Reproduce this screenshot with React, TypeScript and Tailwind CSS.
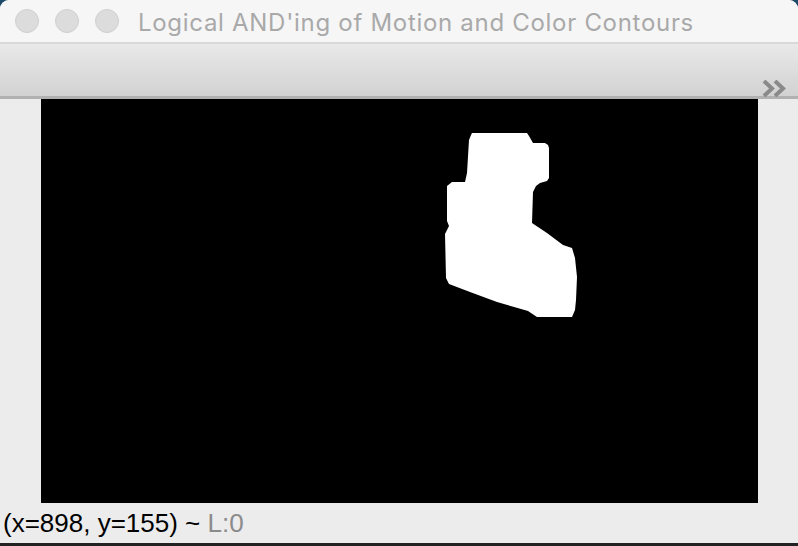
const blob =
  "472,133 527,133 529,136 533,143 545,143 548,145 549,148 549,178 547,181 540,183 536,186 533,192 532,223 547,233 563,245 572,248 575,258 577,277 576,300 575,310 572,317 537,317 528,311 497,302 470,292 449,284 446,278 445,234 449,226 447,221 447,186 452,182 465,182 467,173 469,140 471,135";

function TrafficLight() {
  return <span className="w-6 h-6 rounded-full bg-[#dcdcdc] border border-[#cfcfcf]" />;
}

export default function App() {
  return (
    <div className="w-[798px] h-[546px] bg-[#1c4a68] font-['Liberation_Sans',Arial,sans-serif]">
      <div className="w-full h-full rounded-t-[9px] overflow-hidden flex flex-col bg-[#ececec]">
        {/* Title bar */}
        <div className="h-[44px] flex-shrink-0 bg-[#f6f6f6] border-b-2 border-[#d9d9d9] flex items-center pl-[15px]">
          <div className="flex gap-4">
            <TrafficLight />
            <TrafficLight />
            <TrafficLight />
          </div>
          <span className="ml-[19px] mt-[3px] font-['Inter',sans-serif] text-[24px] tracking-[0.7px] leading-none text-[#a9a9a9] whitespace-nowrap">
            Logical AND'ing of Motion and Color Contours
          </span>
        </div>

        {/* Toolbar */}
        <div className="h-[55px] flex-shrink-0 bg-gradient-to-b from-[#e9e9e9] to-[#d2d2d2] border-b-[3px] border-[#b1b1b1] flex items-end justify-end pr-[11px]">
          <svg width="25" height="17" viewBox="0 0 25 17" className="mb-[-1px]">
            <polyline points="2,1 10,8.5 2,16" fill="none" stroke="#8a8a8a" strokeWidth="4" />
            <polyline points="13,1 21,8.5 13,16" fill="none" stroke="#8a8a8a" strokeWidth="4" />
          </svg>
        </div>

        {/* Canvas */}
        <div className="flex-shrink-0 pl-[41px]">
          <div className="w-[717px] h-[404px] bg-black">
            <svg width="717" height="404" viewBox="41 99 717 404">
              <polygon points={blob} fill="#ffffff" />
            </svg>
          </div>
        </div>

        {/* Status bar */}
        <div className="flex-1 flex items-center pl-[3px] border-b-[3px] border-[#222222] text-[26px] leading-none whitespace-nowrap">
          <span className="text-black">(x=898, y=155) ~&nbsp;</span>
          <span className="text-[#8b8b8b]">L:0</span>
        </div>
      </div>
    </div>
  );
}
